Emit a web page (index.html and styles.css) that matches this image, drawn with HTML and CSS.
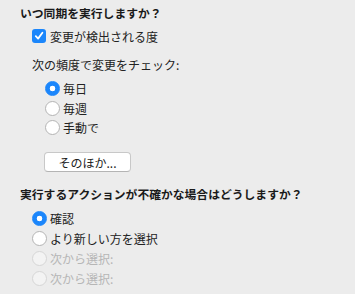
FILE: index.html
```html
<!DOCTYPE html>
<html lang="ja">
<head>
    <meta charset="UTF-8">
    <title>同期</title>
    <link rel="stylesheet" href="styles.css">
</head>
<body>

<div class="pane">
    <h2 class="title">いつ同期を実行しますか？</h2>

    <label class="check">
        <span class="box">
            <svg width="10" height="10" viewBox="0 0 10 10"><path d="M1.8 5.2 L4.1 7.6 L8.4 1.8" fill="none" stroke="#fff" stroke-width="1.8" stroke-linecap="round" stroke-linejoin="round"/></svg>
        </span>
        変更が検出される度
    </label>

    <p class="sub">次の頻度で変更をチェック:</p>

    <div class="radios freq">
        <label class="radio on"><span class="dot"></span>毎日</label>
        <label class="radio"><span class="dot"></span>毎週</label>
        <label class="radio"><span class="dot"></span>手動で</label>
    </div>

    <button class="more">そのほか...</button>

    <h2 class="title second">実行するアクションが不確かな場合はどうしますか？</h2>

    <div class="radios action">
        <label class="radio on"><span class="dot"></span>確認</label>
        <label class="radio"><span class="dot"></span>より新しい方を選択</label>
        <label class="radio off"><span class="dot"></span>次から選択:</label>
        <label class="radio off"><span class="dot"></span>次から選択:</label>
    </div>
</div>

</body>
</html>
```

FILE: styles.css
```css
body {
    margin: 0;
    background: #ececec;
    font-family: "Noto Sans CJK JP", "Liberation Sans", sans-serif;
    font-size: 12px;
    color: #222;
}
.pane {
    padding: 4px 0 0 20px;
}
.title {
    margin: 0;
    font-size: 11.8px;
    font-weight: bold;
    line-height: 18px;
    height: 18px;
    color: #1a1a1a;
}
.check {
    display: flex;
    align-items: center;
    gap: 4px;
    margin: 5px 0 0 12px;
    height: 18px;
}
.box {
    width: 14px;
    height: 14px;
    border-radius: 3px;
    background: #1b86fb;
    display: flex;
    align-items: center;
    justify-content: center;
}
.sub {
    margin: 11px 0 0 12px;
    line-height: 18px;
    height: 18px;
}
.radios {
    display: flex;
    flex-direction: column;
}
.freq {
    margin: 5px 0 0 25px;
}
.freq .radio {
    height: 19.5px;
}
.action {
    margin: 6px 0 0 12px;
}
.action .radio {
    height: 19.8px;
}
.radio {
    display: flex;
    align-items: center;
    gap: 3px;
}
.dot {
    width: 13px;
    height: 13px;
    border-radius: 50%;
    border: 1px solid #b4b4b4;
    background: #fff;
    box-sizing: content-box;
}
.radio.on .dot {
    border-color: #1b86fb;
    background: radial-gradient(circle, #fff 0 2.6px, #1b86fb 3.1px);
}
.radio.off {
    color: #b6b6b6;
}
.radio.off .dot {
    border-color: #d6d6d6;
    background: #f3f3f3;
}
.more {
    display: block;
    margin: 14.5px 0 0 24px;
    width: 87px;
    height: 20px;
    padding: 0;
    border: 1px solid #c8c8c8;
    border-bottom-color: #b4b4b4;
    border-radius: 4px;
    background: #fff;
    font-family: inherit;
    font-size: 12px;
    color: #222;
}
.second {
    margin-top: 13px;
}
```
